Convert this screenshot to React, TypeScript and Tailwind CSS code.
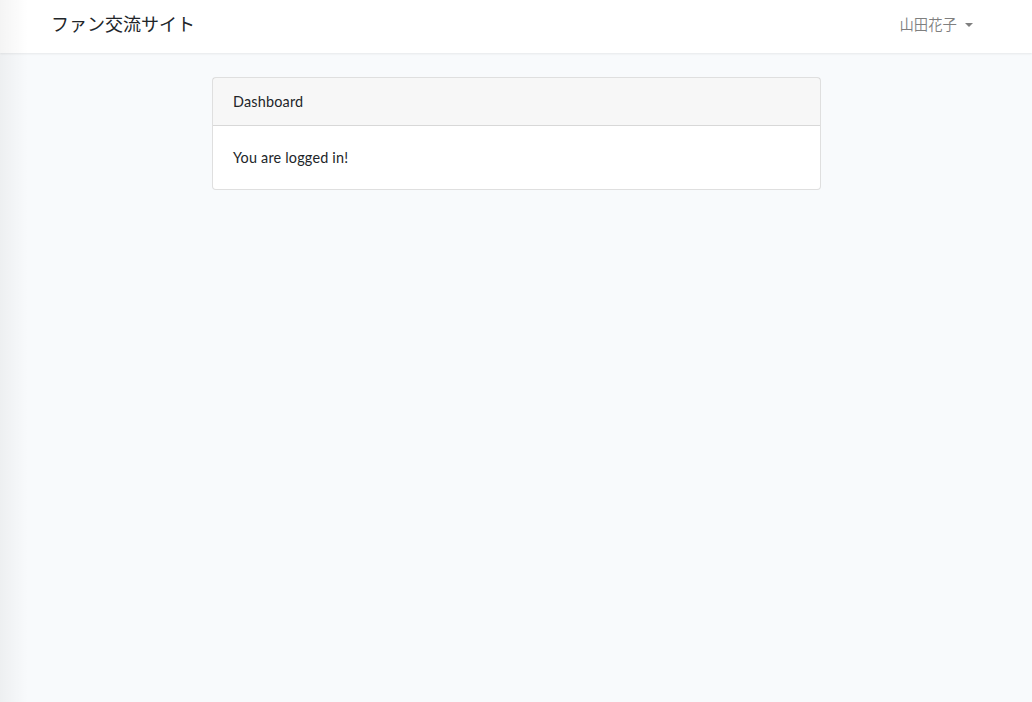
export default function App() {
  return (
    <div
      className="relative min-h-[702px] bg-[#f8fafc] text-[14.4px] leading-[1.6] text-[#212529]"
      style={{ fontFamily: 'Lato, "Noto Sans CJK JP", sans-serif' }}
    >
      <nav className="h-[53px] bg-white shadow-[0_1px_2px_rgba(0,0,0,0.075)]">
        <div className="mx-auto flex h-full w-[960px] items-center justify-between px-[15px] pb-[4px]">
          <a className="text-[18px] text-[#212529]" href="#">
            ファン交流サイト
          </a>
          <div className="flex items-center gap-[8px] pr-[8px] text-[rgba(0,0,0,0.5)]">
            <span>山田花子</span>
            <span className="mt-[1px] h-0 w-0 border-x-[4.3px] border-t-[4.3px] border-x-transparent border-t-[rgba(0,0,0,0.5)]" />
          </div>
        </div>
      </nav>

      <main className="py-6">
        <div className="mx-auto flex w-[960px] justify-center px-[15px]">
          <div className="ml-[1px] w-[609px] rounded-[4px] border border-[rgba(0,0,0,0.125)] bg-white tracking-[0.2px]">
            <div className="border-b border-[rgba(0,0,0,0.125)] bg-[rgba(0,0,0,0.03)] px-5 py-3">
              Dashboard
            </div>
            <div className="p-5">You are logged in!</div>
          </div>
        </div>
      </main>

      <div className="pointer-events-none absolute inset-y-0 left-0 w-[28px] bg-gradient-to-r from-[rgba(0,0,0,0.045)] to-transparent" />
    </div>
  );
}
